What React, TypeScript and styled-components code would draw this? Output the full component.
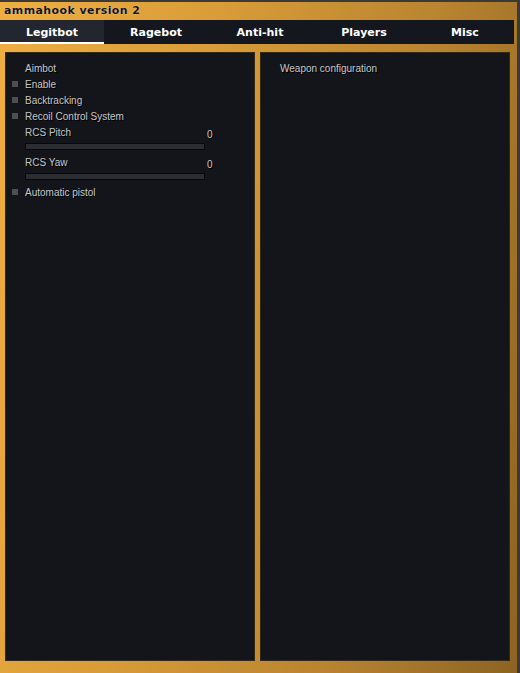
import * as React from "react";
import styled, { createGlobalStyle } from "styled-components";

const GlobalStyle = createGlobalStyle`
  html, body {
    margin: 0;
    padding: 0;
    background: #3b3a37;
  }
  body {
    font-family: "Liberation Sans", Arial, sans-serif;
  }
`;

const Window = styled.div`
  width: 517px;
  height: 671px;
  margin-top: 2px;
  display: flex;
  flex-direction: column;
  background: linear-gradient(100deg, #eeae42 0%, #d89c38 35%, #b98430 70%, #8c6322 100%);
`;

const TitleBar = styled.div`
  height: 18px;
  line-height: 18px;
  padding-left: 4px;
  font-family: "DejaVu Sans", Verdana, sans-serif;
  font-weight: bold;
  font-size: 11px;
  letter-spacing: 0.4px;
  color: #16120a;
  text-shadow: 0 0 1px rgba(255, 240, 210, 0.9);
`;

const TabBar = styled.div`
  width: 514px;
  height: 24px;
  display: grid;
  grid-template-columns: 104px 104px 104px 104px 98px;
  background: #15171e;
`;

const Tab = styled.div<{ $active?: boolean }>`
  display: flex;
  align-items: center;
  justify-content: center;
  font-family: "DejaVu Sans", Verdana, sans-serif;
  font-weight: bold;
  font-size: 11px;
  color: #ffffff;
  background: ${(p) => (p.$active ? "#23262e" : "transparent")};
  box-shadow: ${(p) => (p.$active ? "inset 0 -2px 0 #ffffff" : "none")};
  padding-top: 1px;
`;

const Columns = styled.div`
  flex: 1;
  display: grid;
  grid-template-columns: 250px 250px;
  gap: 5px;
  padding: 8px 7px 12px 5px;
`;

const Panel = styled.div`
  background: #13151b;
  border: 1px solid #33291a;
  padding-top: 7px;
  font-size: 10px;
  color: #c8c8c8;
  text-shadow: 1px 1px 0 #000;
`;

const Row = styled.div<{ $indent?: boolean }>`
  height: 16px;
  display: flex;
  align-items: center;
  padding-left: ${(p) => (p.$indent ? "19px" : "6px")};
`;

const Check = styled.span`
  width: 6px;
  height: 6px;
  background: #4e4f55;
  margin-right: 7px;
  flex: none;
`;

const SliderBlock = styled.div`
  display: grid;
  grid-template-columns: 180px auto;
  grid-template-rows: 16px 14px;
  padding-left: 19px;
`;

const SliderLabel = styled.div`
  display: flex;
  align-items: center;
`;

const SliderValue = styled.div`
  align-self: end;
  line-height: 10px;
  padding-left: 2px;
`;

const Track = styled.div`
  margin-top: 3px;
  height: 5px;
  background: #2b2d33;
  border: 1px solid #07080a;
`;

function Checkbox({ label }: { label: string }) {
  return (
    <Row>
      <Check />
      {label}
    </Row>
  );
}

function Slider({ label, value }: { label: string; value: number }) {
  return (
    <SliderBlock>
      <SliderLabel>{label}</SliderLabel>
      <SliderValue>{value}</SliderValue>
      <Track />
    </SliderBlock>
  );
}

const tabs = ["Legitbot", "Ragebot", "Anti-hit", "Players", "Misc"];

export default function App() {
  return (
    <>
      <GlobalStyle />
      <Window>
        <TitleBar>ammahook version 2</TitleBar>
        <TabBar>
          {tabs.map((t, i) => (
            <Tab key={t} $active={i === 0}>
              {t}
            </Tab>
          ))}
        </TabBar>
        <Columns>
          <Panel>
            <Row $indent>Aimbot</Row>
            <Checkbox label="Enable" />
            <Checkbox label="Backtracking" />
            <Checkbox label="Recoil Control System" />
            <Slider label="RCS Pitch" value={0} />
            <Slider label="RCS Yaw" value={0} />
            <Checkbox label="Automatic pistol" />
          </Panel>
          <Panel>
            <Row $indent>Weapon configuration</Row>
          </Panel>
        </Columns>
      </Window>
    </>
  );
}
